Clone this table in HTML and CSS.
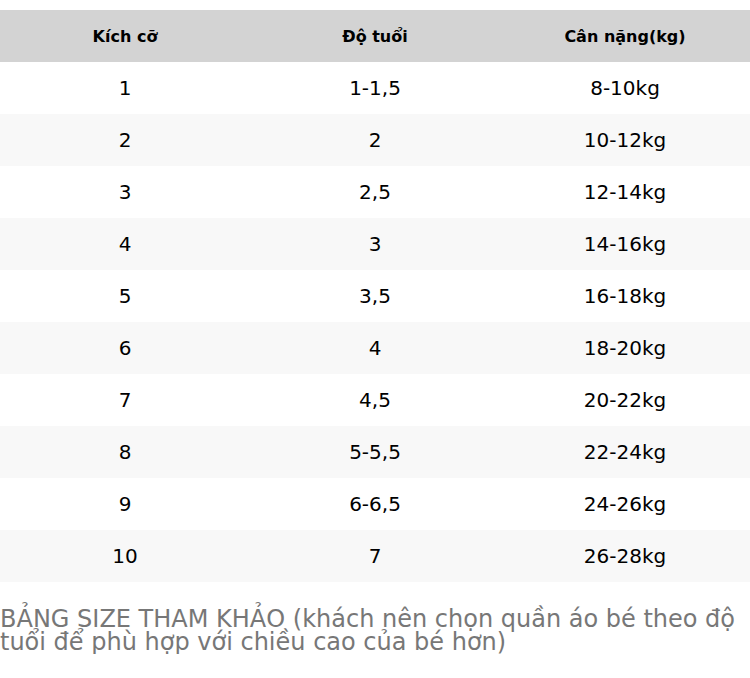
FILE: index.html
```html
<!DOCTYPE html>
<html lang="vi">
<head>
<meta charset="utf-8">
<link rel="stylesheet" href="styles.css">
</head>
<body>
<table class="size-table">
  <thead>
    <tr><th>Kích cỡ</th><th>Độ tuổi</th><th>Cân nặng(kg)</th></tr>
  </thead>
  <tbody>
    <tr><td>1</td><td>1-1,5</td><td>8-10kg</td></tr>
    <tr><td>2</td><td>2</td><td>10-12kg</td></tr>
    <tr><td>3</td><td>2,5</td><td>12-14kg</td></tr>
    <tr><td>4</td><td>3</td><td>14-16kg</td></tr>
    <tr><td>5</td><td>3,5</td><td>16-18kg</td></tr>
    <tr><td>6</td><td>4</td><td>18-20kg</td></tr>
    <tr><td>7</td><td>4,5</td><td>20-22kg</td></tr>
    <tr><td>8</td><td>5-5,5</td><td>22-24kg</td></tr>
    <tr><td>9</td><td>6-6,5</td><td>24-26kg</td></tr>
    <tr><td>10</td><td>7</td><td>26-28kg</td></tr>
  </tbody>
</table>
<p class="caption">BẢNG SIZE THAM KHẢO (khách nên chọn quần áo bé theo độ tuổi để phù hợp với chiều cao của bé hơn)</p>
</body>
</html>
```
FILE: styles.css
```css
body {
  margin: 0;
  padding-top: 10px;
  background: #fff;
  font-family: "DejaVu Sans", sans-serif;
}
.size-table {
  width: 750px;
  border-collapse: collapse;
  table-layout: fixed;
}
.size-table th {
  height: 52px;
  padding: 0;
  background: #d3d3d3;
  font-size: 16px;
  font-weight: bold;
  color: #000;
  text-align: center;
}
.size-table td {
  height: 52px;
  padding: 0;
  font-size: 20px;
  color: #000;
  text-align: center;
}
.size-table tbody tr:nth-child(even) td {
  background: #f8f8f8;
}
.caption {
  margin: 26px 0 0;
  font-family: "DejaVu Sans", sans-serif;
  font-size: 24px;
  line-height: 23px;
  color: #777;
}
```
